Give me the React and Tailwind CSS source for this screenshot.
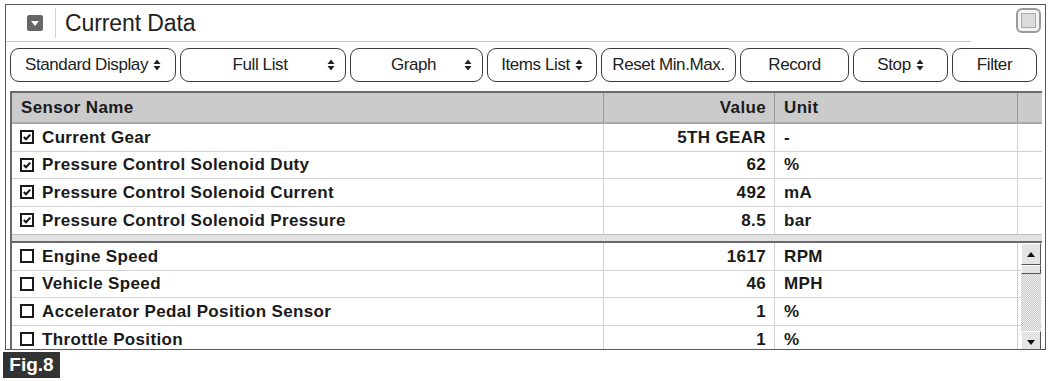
import React from 'react';

const SELECTED = [
  { name: 'Current Gear', value: '5TH GEAR', unit: '-' },
  { name: 'Pressure Control Solenoid Duty', value: '62', unit: '%' },
  { name: 'Pressure Control Solenoid Current', value: '492', unit: 'mA' },
  { name: 'Pressure Control Solenoid Pressure', value: '8.5', unit: 'bar' },
];

const OTHERS = [
  { name: 'Engine Speed', value: '1617', unit: 'RPM' },
  { name: 'Vehicle Speed', value: '46', unit: 'MPH' },
  { name: 'Accelerator Pedal Position Sensor', value: '1', unit: '%' },
  { name: 'Throttle Position', value: '1', unit: '%' },
];

function SortIcon() {
  return (
    <svg width="8" height="12" viewBox="0 0 8 12" className="shrink-0">
      <path d="M4 0.5L7.5 5H0.5z" fill="#222" />
      <path d="M4 11.5L7.5 7H0.5z" fill="#222" />
    </svg>
  );
}

function ToolButton({ label, w, sort, spread }) {
  return (
    <div
      className={`h-[34px] ${w} shrink-0 rounded-[9px] border-[1.5px] border-[#3a3a3a] bg-white flex items-center text-[17px] text-[#222] tracking-[-0.4px]`}
    >
      {spread ? (
        <>
          <span className="flex-1 text-center pl-3">{label}</span>
          <span className="pr-[10px]">
            <SortIcon />
          </span>
        </>
      ) : (
        <span className="flex-1 flex items-center justify-center gap-[5px]">
          {label}
          {sort && <SortIcon />}
        </span>
      )}
    </div>
  );
}

function Check({ on }) {
  return (
    <span className="w-[14px] h-[14px] border-2 border-[#1a1a1a] bg-white flex items-center justify-center shrink-0">
      {on && (
        <svg width="10" height="10" viewBox="0 0 10 10">
          <path d="M1.8 5L4 7.2L8.2 2.6" stroke="#111" strokeWidth="2" fill="none" />
        </svg>
      )}
    </span>
  );
}

function Row({ row, on, last }) {
  return (
    <div className={`grid grid-cols-[592px_171px_243px_1fr] h-[27.5px] ${last ? '' : 'border-b border-[#d2d2d2]'}`}>
      <div className="flex items-center gap-[8px] pl-[8px] border-r border-[#d2d2d2]">
        <Check on={on} />
        <span className="font-bold">{row.name}</span>
      </div>
      <div className="flex items-center justify-end pr-[8px] border-r border-[#d2d2d2] font-bold">
        {row.value}
      </div>
      <div className="flex items-center pl-[9px] font-bold border-r border-[#d2d2d2]">{row.unit}</div>
      <div />
    </div>
  );
}

function ScrollBtn({ up }) {
  return (
    <div className="h-[22px] w-[20px] bg-[#e4e4e4] border border-t-white border-l-white border-r-[#555] border-b-[#555] flex items-center justify-center">
      <svg width="8" height="5" viewBox="0 0 8 5">
        <path d={up ? 'M4 0L8 5H0z' : 'M4 5L8 0H0z'} fill="#111" />
      </svg>
    </div>
  );
}

export default function App() {
  return (
    <div className="w-[1050px] h-[381px] bg-white font-['Liberation_Sans',Arial,sans-serif] text-[#1a1a1a] overflow-hidden">
      <div className="ml-[5px] mt-[4px] w-[1041px] h-[346px] border border-[#5a5a5a] flex flex-col">
        {/* Title bar */}
        <div className="h-[37px] shrink-0 flex items-center">
          <div className="w-[965px] h-full flex items-center border-b border-[#c4c4c4]">
            <div className="ml-[21px] w-[16px] h-[16px] rounded-[2px] bg-[#666] flex items-center justify-center">
              <svg width="8" height="5" viewBox="0 0 8 5">
                <path d="M0 0H8L4 5z" fill="#fff" />
              </svg>
            </div>
            <div className="ml-[12px] w-px h-[30px] bg-[#d4d4d4]" />
            <span className="ml-[9px] text-[23px] text-[#222] tracking-[-0.1px]">Current Data</span>
          </div>
          <div className="ml-auto mr-[4px] w-[25px] h-[25px] rounded-[6px] border-2 border-[#9a9a9a] bg-[#f4f4f4] flex items-center justify-center -mt-[6px]">
            <div className="w-[15px] h-[15px] bg-[#dcdcdc] border border-[#aaa]" />
          </div>
        </div>

        {/* Toolbar */}
        <div className="flex gap-[4px] pl-[4px] mt-[6px]">
          <ToolButton label="Standard Display" w="w-[166px]" sort />
          <ToolButton label="Full List" w="w-[166px]" sort spread />
          <ToolButton label="Graph" w="w-[133px]" sort spread />
          <ToolButton label="Items List" w="w-[110px]" sort />
          <ToolButton label="Reset Min.Max." w="w-[135px]" />
          <ToolButton label="Record" w="w-[109px]" />
          <ToolButton label="Stop" w="w-[95px]" sort />
          <ToolButton label="Filter" w="w-[85px]" />
        </div>

        {/* Table */}
        <div className="mt-[9px] ml-[4px] mr-[3px] flex-1 border-l-2 border-t-2 border-[#6a6a6a] overflow-hidden text-[17px] tracking-[0.35px]">
          <div className="grid grid-cols-[592px_171px_243px_1fr] h-[31px] bg-[#cbcbcb] border-b-2 border-[#a8a8a8] font-bold">
            <div className="flex items-center pl-[9px] border-r border-[#999]">Sensor Name</div>
            <div className="flex items-center justify-end pr-[8px] border-r border-[#999]">Value</div>
            <div className="flex items-center pl-[9px] border-r border-[#999]">Unit</div>
            <div />
          </div>
          {SELECTED.map((r, i) => (
            <Row key={r.name} row={r} on last={i === SELECTED.length - 1} />
          ))}
          <div className="h-[9px] bg-[#e2e2e2] border-t border-[#bdbdbd] border-b-2 border-b-[#6a6a6a]" />
          <div className="relative">
            {OTHERS.map((r, i) => (
              <Row key={r.name} row={r} last={i === OTHERS.length - 1} />
            ))}
            <div className="absolute right-[1px] top-0 bottom-0 w-[20px] flex flex-col bg-[repeating-conic-gradient(#c6c6c6_0_25%,#f2f2f2_0_50%)] bg-[length:2px_2px]">
              <ScrollBtn up />
              <div className="h-[9px] w-[20px] bg-[#e4e4e4] border border-t-white border-l-white border-r-[#555] border-b-[#555]" />
              <div className="flex-1" />
              <ScrollBtn />
            </div>
          </div>
        </div>
      </div>

      <div className="ml-[3px] mt-[2px] w-[57px] h-[26px] bg-[#333] text-white font-bold text-[19px] flex items-center justify-center">
        Fig.8
      </div>
    </div>
  );
}
